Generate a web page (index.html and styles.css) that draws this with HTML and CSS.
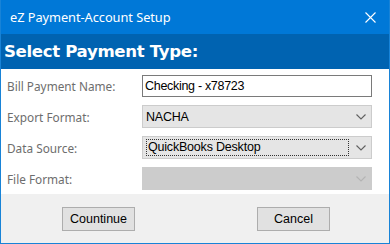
FILE: index.html
```html
<!DOCTYPE html>
<html>
<head>
<meta charset="utf-8">
<link rel="stylesheet" href="styles.css">
</head>
<body>
<div class="window">
  <div class="titlebar">
    <span class="title">eZ Payment-Account Setup</span>
    <svg class="close" width="11" height="11" viewBox="0 0 11 11"><path d="M0.5 0.5 L10.5 10.5 M10.5 0.5 L0.5 10.5" stroke="#ffffff" stroke-width="1.1" fill="none"/></svg>
  </div>
  <div class="header">Select Payment Type:</div>
  <div class="form">
    <label class="label">Bill Payment Name:</label>
    <div class="textbox">Checking - x78723</div>

    <label class="label">Export Format:</label>
    <div class="combo"><span class="value">NACHA</span><svg class="chev" width="10" height="6" viewBox="0 0 10 6"><path d="M0.5 0.5 L5 5 L9.5 0.5" stroke="#606060" stroke-width="1.1" fill="none"/></svg></div>

    <label class="label">Data Source:</label>
    <div class="combo"><span class="value focus">QuickBooks Desktop</span><svg class="chev" width="10" height="6" viewBox="0 0 10 6"><path d="M0.5 0.5 L5 5 L9.5 0.5" stroke="#606060" stroke-width="1.1" fill="none"/></svg></div>

    <label class="label">File Format:</label>
    <div class="combo disabled"><span class="value"></span><svg class="chev" width="10" height="6" viewBox="0 0 10 6"><path d="M0.5 0.5 L5 5 L9.5 0.5" stroke="#b4b4b4" stroke-width="1.1" fill="none"/></svg></div>
  </div>
  <div class="footer">
    <button class="btn">Countinue</button>
    <button class="btn">Cancel</button>
  </div>
</div>
</body>
</html>
```
FILE: styles.css
```css
html, body {
  margin: 0;
  padding: 0;
  background: #ffffff;
}
.window {
  width: 390px;
  height: 244px;
  box-sizing: border-box;
  border: 1px solid #1883d7;
  border-top: none;
  display: flex;
  flex-direction: column;
  background: #ffffff;
  overflow: hidden;
}
.titlebar {
  height: 34px;
  flex: none;
  background: #0078d7;
  margin: 0 -1px;
  display: flex;
  align-items: center;
  justify-content: space-between;
  padding: 0 14px 0 10px;
}
.title {
  color: #ffffff;
  font-family: "Noto Sans", "Open Sans", sans-serif;
  font-size: 12.8px;
  letter-spacing: -0.05px;
}
.close {
  display: block;
}
.header {
  height: 35px;
  flex: none;
  background: #0063b1;
  color: #ffffff;
  font-family: "DejaVu Sans", Verdana, sans-serif;
  font-weight: bold;
  font-size: 16.6px;
  line-height: 35px;
  padding-left: 3px;
  letter-spacing: -0.35px;
}
.form {
  flex: none;
  display: grid;
  grid-template-columns: 135px 230px;
  grid-auto-rows: 23px;
  row-gap: 8px;
  padding: 5px 0 4px 6px;
  background: #ffffff;
  align-items: center;
}
.label {
  font-family: "Noto Sans", "Open Sans", sans-serif;
  font-size: 11.8px;
  color: #6d6d6d;
}
.textbox {
  height: 22px;
  box-sizing: border-box;
  border: 1px solid #7a7a7a;
  background: #ffffff;
  font-family: "Liberation Sans", Arial, sans-serif;
  font-size: 12.5px;
  line-height: 20px;
  padding-left: 2px;
  color: #000000;
  letter-spacing: -0.3px;
}
.combo {
  height: 23px;
  box-sizing: border-box;
  border: 1px solid #cccccc;
  background: #e5e5e5;
  display: flex;
  align-items: center;
  justify-content: space-between;
  padding: 0 5px 0 3px;
}
.value {
  font-family: "Liberation Sans", Arial, sans-serif;
  font-size: 12.5px;
  color: #000000;
  flex: none;
  letter-spacing: -0.2px;
}
.value.focus {
  width: 203px;
  box-sizing: border-box;
  border: 1px dotted #333333;
  height: 17px;
  line-height: 15px;
  padding-left: 1px;
}
.combo.disabled {
  background: #cccccc;
  border-color: #cccccc;
}
.chev {
  display: block;
}
.footer {
  flex: 1;
  background: #f0f0f0;
  display: flex;
  align-items: flex-start;
  padding: 13px 0 0 61px;
  gap: 122px;
}
.btn {
  width: 73px;
  height: 24px;
  box-sizing: border-box;
  border: 1px solid #adadad;
  background: #e1e1e1;
  font-family: "Liberation Sans", Arial, sans-serif;
  font-size: 12.5px;
  color: #000000;
  padding: 0;
  margin: 0;
}
```
